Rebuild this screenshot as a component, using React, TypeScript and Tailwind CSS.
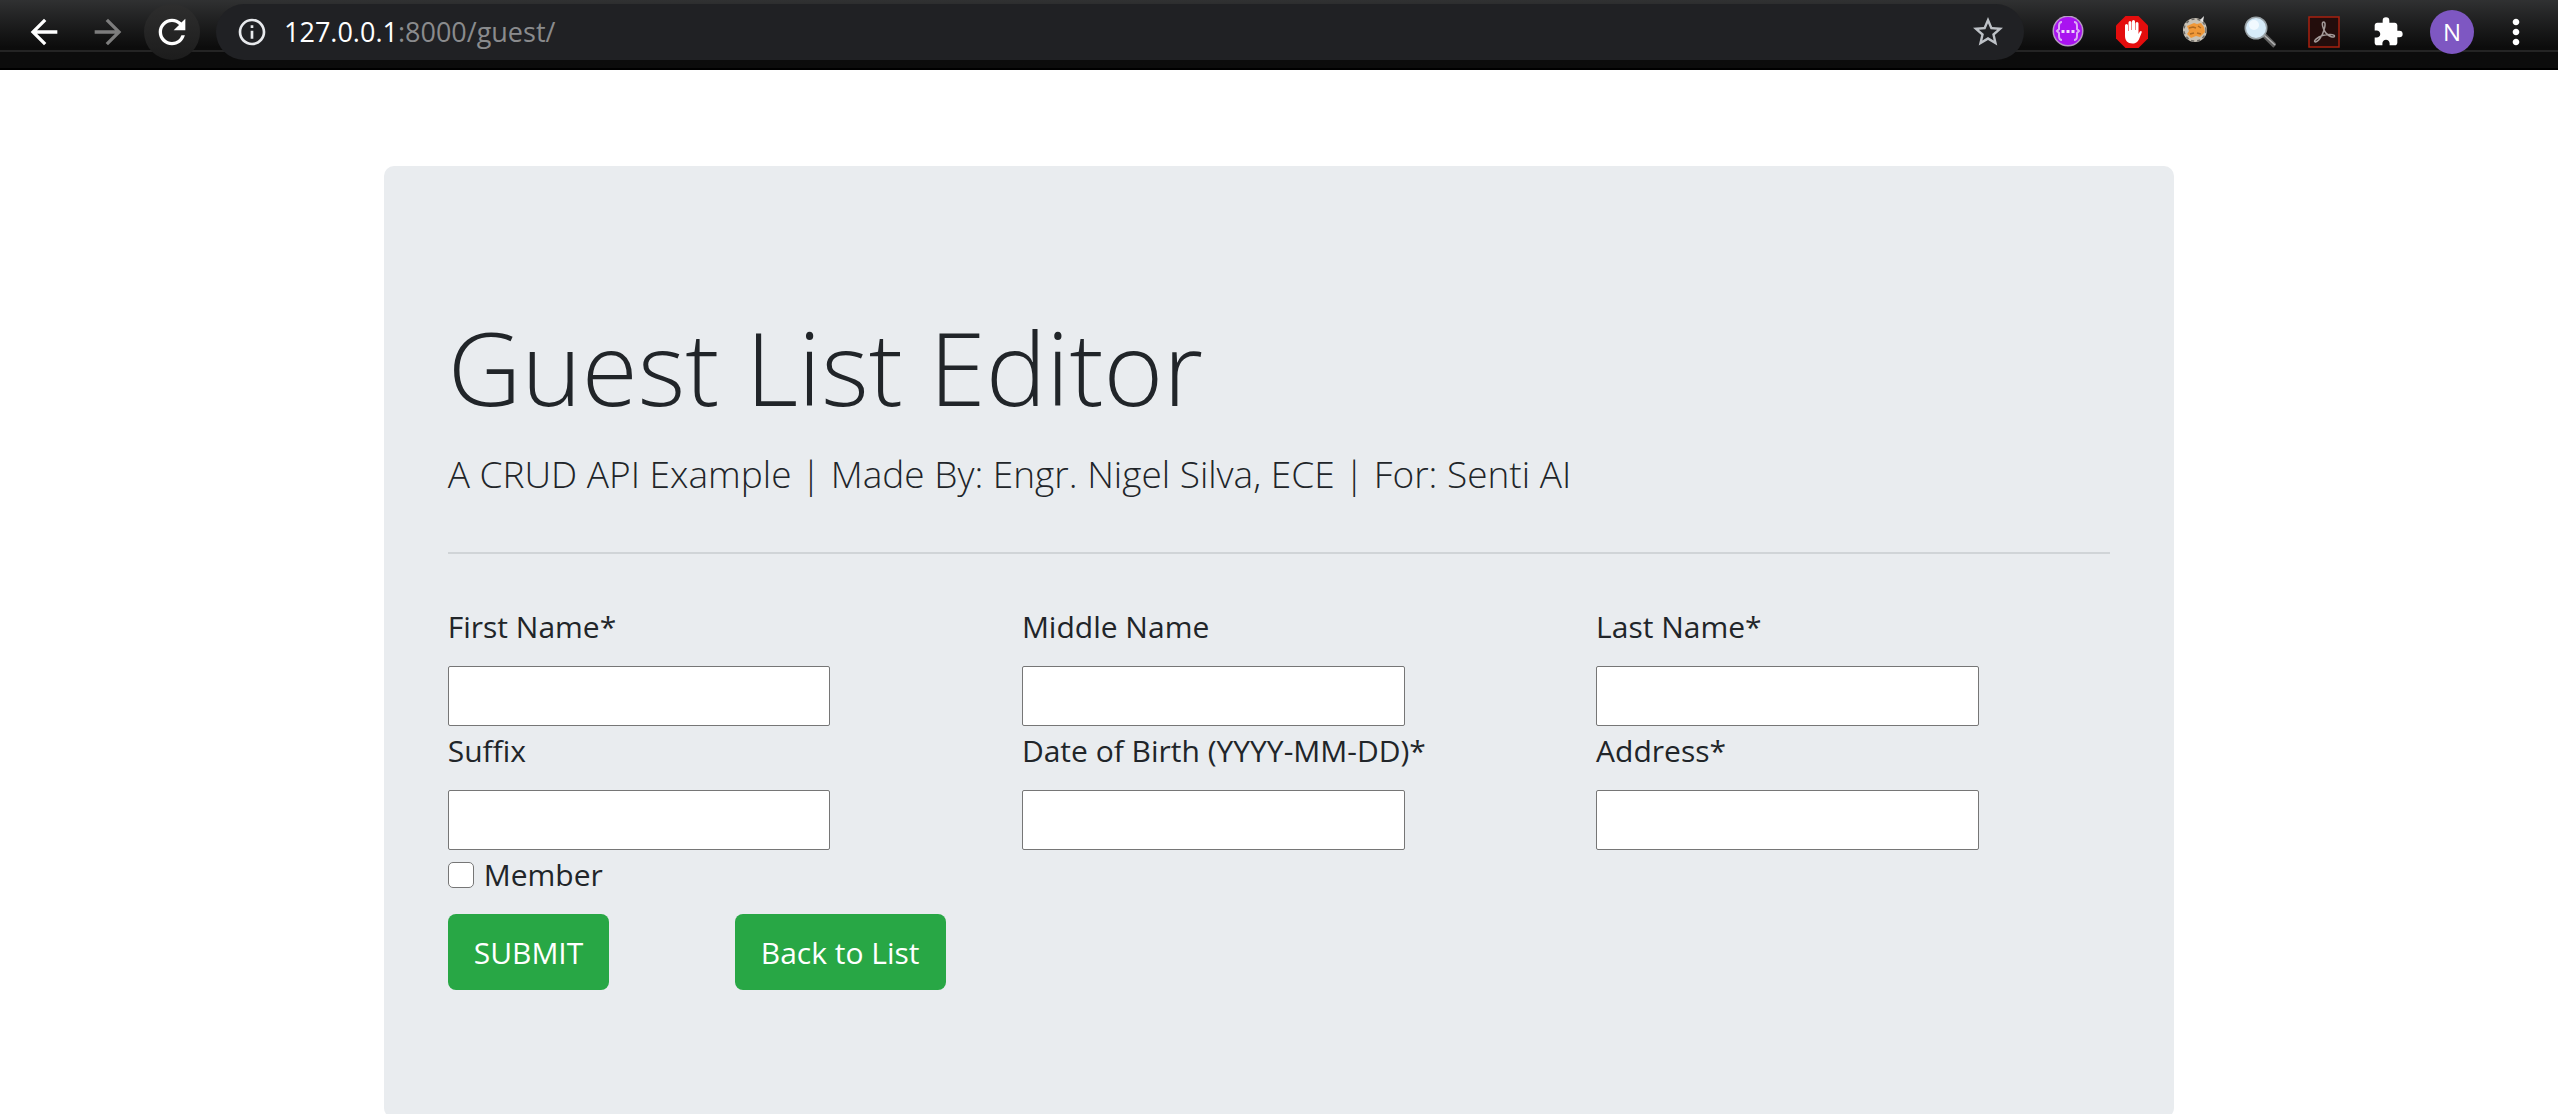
import type { ReactNode } from "react";
import { MdArrowBack, MdArrowForward, MdRefresh, MdInfoOutline, MdStarBorder, MdExtension, MdMoreVert } from "react-icons/md";

function BracesIcon() {
  return (
    <svg viewBox="0 0 32 32" className="size-8">
      <circle cx="16" cy="15" r="15.5" fill="#b79ac4" />
      <circle cx="16" cy="15" r="14" fill="#a913f0" />
      <path d="M10 6q-3 0-3 4v3l-2 2 2 2v3q0 4 3 4M22 6q3 0 3 4v3l2 2-2 2v3q0 4-3 4" fill="none" stroke="#dcaaf5" strokeWidth="2" />
      <path d="M9.500 14h3v3h-3zM14.500 14h3v3h-3zM19.500 14h3v3h-3z" fill="#f0d8fc" />
    </svg>
  );
}

function StopHandIcon() {
  return (
    <svg viewBox="0 0 32 32" className="size-8">
      <path d="M9.500 0h13L32 9.500v13L22.500 32h-13L0 22.500v-13z" fill="#e40d0d" />
      <path d="M9 17V9.500a1.500 1.500 0 0 1 3 0V15h.5V6.500a1.500 1.500 0 0 1 3 0V14h.5V5.500a1.500 1.500 0 0 1 3 0V14h.5V7.500a1.500 1.500 0 0 1 3 0V18l1.300-2.400c.8-1.200 2.300-.6 1.900.8L23.500 22c-1.500 4-3.500 5.500-7 5.500-5 0-7.500-3-7.500-7.500z" fill="#fff" />
    </svg>
  );
}

function CookieIcon() {
  return (
    <svg viewBox="0 0 32 32" className="size-8">
      <circle cx="15" cy="14" r="12" fill="#c9c2b6" />
      <circle cx="15" cy="14" r="11" fill="none" stroke="#6d6a66" strokeWidth="1.500" strokeDasharray="3 3" />
      <path d="M7 10l7-3 3 1 4-1 3 4 1 5-5 5-4-1-5 2-4-4 2-3z" fill="#f0993a" />
      <path d="M9 12l4-1 3 1M18 10l3 2M10 18l4-1M17 17l4 1" stroke="#b06a22" strokeWidth="1.500" fill="none" />
      <path d="M20 4l4-4-1 6z" fill="#e4e4e4" />
    </svg>
  );
}

function MagnifierIcon() {
  return (
    <svg viewBox="0 0 32 32" className="size-8">
      <path d="M20 19l11 11" stroke="#5f5f5f" strokeWidth="5" />
      <path d="M20 19l11 10" stroke="#b5b5b5" strokeWidth="1.500" />
      <circle cx="12" cy="12" r="11.500" fill="#9aa3a8" />
      <circle cx="12" cy="12" r="10" fill="#d6ebf9" />
      <circle cx="10" cy="9" r="5" fill="#f1f9ff" />
    </svg>
  );
}

function AcrobatIcon() {
  return (
    <svg viewBox="0 0 32 32" className="size-8">
      <path d="M1 1h30v30H1z" fill="#230d0c" stroke="#a8210f" strokeWidth="1.500" />
      <path d="M15.500 6c2.500 0 1.500 5 .5 8-1.500 5-5 11.500-8.500 12-3-.5 2-5 7-6.500 5-1.500 12-1.500 12 .5 0 2.500-6 .5-9-3.500-2.500-3-4.500-10.500-2-10.500z" fill="none" stroke="#a39a99" strokeWidth="1.500" />
    </svg>
  );
}

function BarButton({ label, className = "w-8", children }: { label: string; className?: string; children: ReactNode }) {
  return (
    <button type="button" aria-label={label} className={`flex shrink-0 items-center justify-center ${className}`}>
      {children}
    </button>
  );
}

function BrowserBar() {
  return (
    <header className="h-[70px] shrink-0 border-b-2 border-black bg-linear-to-b from-[#303132] to-[#0c0c0c] to-70%">
      <div className="h-[52px] border-b-2 border-[#242424]">
        <div className="flex h-16 items-center pr-[22px] pl-4 text-white">
          <BarButton label="Back" className="w-14"><MdArrowBack className="size-10" /></BarButton>
          <BarButton label="Forward" className="ml-2 w-14 text-[#7d7d7d]"><MdArrowForward className="size-10" /></BarButton>
          <BarButton label="Reload" className="ml-2 size-14 rounded-full bg-linear-to-b from-[#2e2e2e] to-[#1c1c1c]"><MdRefresh className="size-10" /></BarButton>
          <div className="ml-4 flex h-14 flex-1 items-center rounded-full bg-[#202124] px-5">
            <MdInfoOutline className="size-8 shrink-0 text-[#e8eaed]" />
            <div className="ml-4 flex-1 text-[27px] leading-10">
              127.0.0.1<span className="text-[#8a8b8d]">:8000/guest/</span>
            </div>
            <BarButton label="Bookmark"><MdStarBorder className="size-9 shrink-0 text-[#bdc1c6]" /></BarButton>
          </div>
          <div className="ml-7 flex items-center gap-8">
            <BarButton label="Code tools"><BracesIcon /></BarButton>
            <BarButton label="Ad blocker"><StopHandIcon /></BarButton>
            <BarButton label="Cookies"><CookieIcon /></BarButton>
            <BarButton label="Magnifier"><MagnifierIcon /></BarButton>
            <BarButton label="PDF"><AcrobatIcon /></BarButton>
            <BarButton label="Extensions"><MdExtension className="size-8" /></BarButton>
          </div>
          <BarButton label="Profile" className="ml-[26px] size-11 rounded-full bg-[#7e57c2] text-2xl">N</BarButton>
          <BarButton label="Menu" className="ml-[22px]"><MdMoreVert className="size-10 shrink-0" /></BarButton>
        </div>
      </div>
    </header>
  );
}

const fields = [
  { id: "first", label: "First Name*" },
  { id: "middle", label: "Middle Name" },
  { id: "last", label: "Last Name*" },
  { id: "suffix", label: "Suffix" },
  { id: "birth", label: "Date of Birth (YYYY-MM-DD)*" },
  { id: "address", label: "Address*" },
];

export default function App() {
  return (
    <div className="flex h-screen flex-col overflow-hidden bg-white font-['Segoe_UI','Open_Sans',sans-serif] text-[#212529]">
      <BrowserBar />
      <main className="mx-[15%] mt-24 shrink-0 rounded-[10px] bg-[#e9ecef] px-16 py-32">
        <h1 className="mb-1 text-[102px] leading-[146px] font-light">Guest List Editor</h1>
        <p className="text-[37px] leading-[60px] font-light">
          A CRUD API Example | Made By: Engr. Nigel Silva, ECE | For: Senti AI
        </p>
        <hr className="my-12 border-t-2 border-[#d0d4d7]" />
        <form className="text-[30px] leading-[50px]">
          <div className="-mr-[60px] grid grid-cols-3">
            {fields.map((f) => (
              <div key={f.id} className="flex flex-col items-start">
                <label htmlFor={f.id} className="mb-[14px]">{f.label}</label>
                <input id={f.id} type="text" className="h-[60px] w-2/3 rounded-[2px] border border-[#767676] bg-white px-1" />
              </div>
            ))}
          </div>
          <div className="mb-[14px] flex items-center">
            <input id="member" type="checkbox" className="size-[26px] appearance-none rounded-[5px] border border-[#767676] bg-white" />
            <label htmlFor="member" className="ml-[10px]">Member</label>
          </div>
          <div className="-mr-[60px] grid grid-cols-6">
            <div>
              <button type="submit" className="block rounded-lg bg-[#28a745] px-[26px] pt-[14px] pb-3 text-white">SUBMIT</button>
            </div>
            <div>
              <button type="button" className="block rounded-lg bg-[#28a745] px-[26px] pt-[14px] pb-3 whitespace-nowrap text-white">Back to List</button>
            </div>
          </div>
        </form>
      </main>
    </div>
  );
}
